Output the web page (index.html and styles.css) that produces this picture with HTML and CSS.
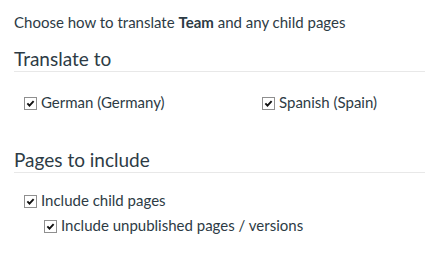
FILE: index.html
```html
<!DOCTYPE html>
<html lang="en">
<head>
    <meta charset="UTF-8">
    <title>Translate page</title>
    <link rel="stylesheet" href="styles.css">
</head>
<body>
    <p class="intro">Choose how to translate <strong>Team</strong> and any child pages</p>

    <h2 class="section-title">Translate to</h2>
    <div class="locales">
        <label class="check">
            <span class="box"><svg viewBox="0 0 13 13"><path d="M2.8 6.4 L5.3 9 L10.2 3.6"/></svg></span>
            German (Germany)
        </label>
        <label class="check">
            <span class="box"><svg viewBox="0 0 13 13"><path d="M2.8 6.4 L5.3 9 L10.2 3.6"/></svg></span>
            Spanish (Spain)
        </label>
    </div>

    <h2 class="section-title pages-title">Pages to include</h2>
    <div class="pages">
        <label class="check">
            <span class="box"><svg viewBox="0 0 13 13"><path d="M2.8 6.4 L5.3 9 L10.2 3.6"/></svg></span>
            Include child pages
        </label>
        <label class="check nested">
            <span class="box"><svg viewBox="0 0 13 13"><path d="M2.8 6.4 L5.3 9 L10.2 3.6"/></svg></span>
            Include unpublished pages / versions
        </label>
    </div>
</body>
</html>
```

FILE: styles.css
```css
body {
    margin: 0;
    padding: 0 0 0 14px;
    font-family: Lato, "Open Sans", sans-serif;
    color: #2d3b45;
    background: #fff;
}
.intro {
    margin: 12px 0 0;
    font-size: 15px;
    line-height: 20px;
}
.intro strong { font-weight: bold; }

.section-title {
    margin: 15px 0 0;
    padding-bottom: 0;
    font-size: 19px;
    font-weight: normal;
    line-height: 24px;
    border-bottom: 1px solid #e8e8e8;
}
.pages-title { margin-top: 37px; }

.locales {
    display: grid;
    grid-template-columns: 238px 1fr;
    padding: 21px 0 0 10px;
}
.pages {
    display: flex;
    flex-direction: column;
    gap: 7px;
    padding: 18px 0 0 10px;
}

.check {
    display: flex;
    align-items: flex-start;
    gap: 4px;
    font-size: 15px;
    line-height: 18px;
}
.check.nested { margin-left: 20px; }

.box {
    width: 13px;
    height: 13px;
    margin-top: 4px;
    box-sizing: border-box;
    border: 1px solid #8f8f8f;
    background: #fff;
    display: flex;
    flex-shrink: 0;
}
.box svg {
    width: 11px;
    height: 11px;
}
.box path {
    fill: none;
    stroke: #111;
    stroke-width: 2.2;
}
```
